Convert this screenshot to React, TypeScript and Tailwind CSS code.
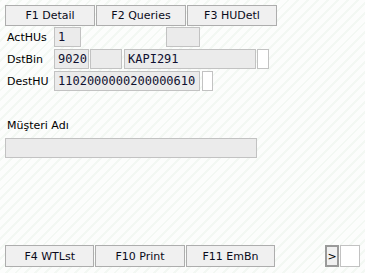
export default function App() {
  const btn =
    "w-[90px] h-[21px] border border-[#adadad] bg-[#f0f0f0] text-[11px] text-[#0a0a1a] flex items-center justify-center leading-none";
  const box =
    "h-[20px] border border-[#c2c2c2] bg-[#ebebeb] text-[12px] text-[#101030] flex items-center pl-[3px] leading-none";
  const mono = { fontFamily: '"DejaVu Sans Mono", monospace' } as const;
  const white = "h-[20px] border border-[#c2c2c2] bg-white";
  const label = "w-[49px] pl-[2px] text-[11px] text-black leading-none";
  return (
    <div
      className="w-[365px] h-[273px] flex flex-col px-[5px] pt-[5px] pb-[6px] bg-[repeating-linear-gradient(135deg,#f3f8f3_0px,#f3f8f3_2px,#fcfdfc_2px,#fcfdfc_7px)]"
      style={{ fontFamily: '"DejaVu Sans", Verdana, sans-serif' }}
    >
      <div className="flex gap-[1px]">
        <div className={btn}>F1 Detail</div>
        <div className={btn}>F2 Queries</div>
        <div className={btn}>F3 HUDetl</div>
      </div>

      <div className="flex flex-col gap-[2px] mt-[1px]">
        <div className="flex items-center h-[20px]">
          <div className={label}>ActHUs</div>
          <div className={`${box} w-[27px]`} style={mono}>1</div>
          <div className={`${box} w-[34px] ml-[85px]`}></div>
        </div>
        <div className="flex items-center h-[20px]">
          <div className={label}>DstBin</div>
          <div className={`${box} w-[35px]`} style={mono}>9020</div>
          <div className={`${box} w-[32px] ml-[1px]`}></div>
          <div className={`${box} w-[132px] ml-[2px]`} style={mono}>KAPI291</div>
          <div className={`${white} w-[12px] ml-[1px]`}></div>
        </div>
        <div className="flex items-center h-[20px]">
          <div className={label}>DestHU</div>
          <div className={`${box} w-[146px]`} style={mono}>1102000000200000610</div>
          <div className={`${white} w-[11px] ml-[2px]`}></div>
        </div>
      </div>

      <div className="mt-[28px] pl-[2px] text-[11px] text-black leading-[14px]">Müşteri Adı</div>
      <div className={`${box} w-[252px] mt-[5px]`}></div>

      <div className="flex items-center gap-[1px] mt-auto">
        <div className={`${btn} h-[22px]`}>F4 WTLst</div>
        <div className={`${btn} h-[22px]`}>F10 Print</div>
        <div className={`${btn} h-[22px]`}>F11 EmBn</div>
        <div className="ml-[49px] w-[14px] h-[22px] border-2 border-[#9a9a9a] bg-[#f0f0f0] flex items-center justify-center text-[11px] text-black leading-none">
          &gt;
        </div>
        <div className="w-[20px] h-[22px] border border-[#c2c2c2] bg-white"></div>
      </div>
    </div>
  );
}
